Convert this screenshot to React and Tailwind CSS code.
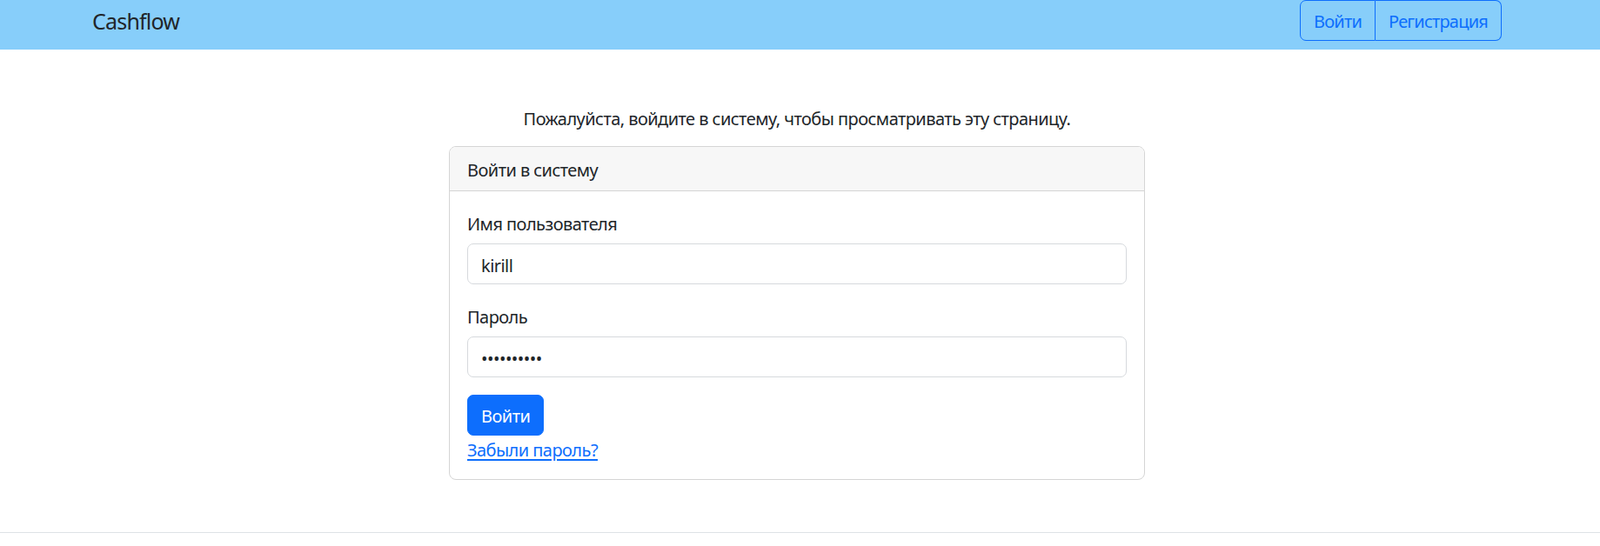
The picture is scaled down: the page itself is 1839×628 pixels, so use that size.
export default function App() {
  return (
    <div className="min-h-screen bg-white text-[#212529] font-['Noto_Sans',sans-serif] text-[20px] leading-[30px] tracking-[-0.55px]">
      {/* Navbar */}
      <nav className="bg-[#87cefa] pb-[10px]">
        <div className="mr-[7px]">
          <div className="mx-auto w-[1650px] px-[15px] flex items-center justify-between">
            <a href="#" className="text-[25px] leading-[37px] tracking-[-0.8px] text-[#212529] pt-[2px]">
              Cashflow
            </a>
            <div className="flex h-[47px]">
              <button className="px-[15px] pt-[2px] text-[20px] tracking-[-0.8px] text-[#0d6efd] border border-[#0d6efd] rounded-l-[7px]">
                Войти
              </button>
              <button className="px-[15px] pt-[2px] text-[20px] tracking-[-0.8px] text-[#0d6efd] border border-l-0 border-[#0d6efd] rounded-r-[7px]">
                Регистрация
              </button>
            </div>
          </div>
        </div>
      </nav>

      {/* Content */}
      <main className="mr-[7px] pt-[61px] pb-[60px]">
        <p className="text-center mb-[20px] pt-[8px] leading-[22px]">
          Пожалуйста, войдите в систему, чтобы просматривать эту страницу.
        </p>
        <div className="mx-auto w-[800px] border border-[#d5d5d5] rounded-[8px] overflow-hidden">
          <div className="bg-[#f7f7f7] border-b border-[#d5d5d5] px-[20px] pt-[14px] pb-[10px] leading-[26px]">
            Войти в систему
          </div>
          <div className="p-[20px]">
            <label className="block mb-[10px] pt-[5px] leading-[25px]">Имя пользователя</label>
            <input
              type="text"
              defaultValue="kirill"
              className="block w-full h-[47px] px-[15px] pt-[4px] border border-[#d6d9dd] rounded-[7px] text-[20px] text-[#212529] mb-[20px] outline-none tracking-[-0.55px]"
            />
            <label className="block mb-[10px] pt-[5px] leading-[25px]">Пароль</label>
            <input
              type="password"
              defaultValue="kirill1234"
              className="block w-full h-[47px] px-[15px] pt-[4px] border border-[#d6d9dd] rounded-[7px] text-[20px] text-[#212529] mb-[20px] outline-none"
            />
            <button className="h-[47px] px-[15px] pt-[3px] bg-[#0d6efd] text-white rounded-[7px] border border-[#0d6efd]">
              Войти
            </button>
            <div className="pt-[4px] leading-[26px]">
              <a href="#" className="text-[#0d6efd] underline underline-offset-[3px]">
                Забыли пароль?
              </a>
            </div>
          </div>
        </div>
      </main>

      <footer className="border-t border-[#dee2e6] h-[20px]" />
    </div>
  );
}
